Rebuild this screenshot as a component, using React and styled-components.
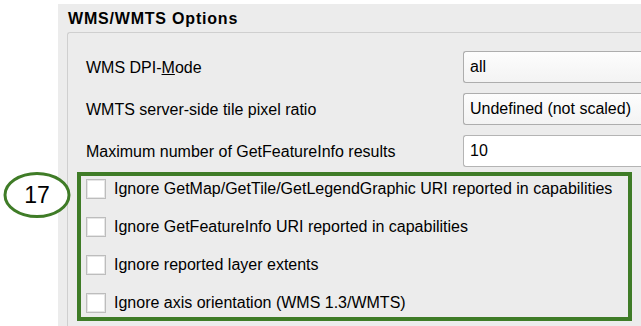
import React from "react";
import styled, { createGlobalStyle } from "styled-components";

const Global = createGlobalStyle`
  html, body { margin: 0; padding: 0; background: #ffffff; overflow: hidden; }
  body { font-family: "Liberation Sans", Arial, sans-serif; }
  #root { width: 641px; height: 326px; overflow: hidden; position: relative; }
`;

const Page = styled.div`
  width: 641px;
  height: 326px;
  padding: 4px 0 0 58px;
  box-sizing: border-box;
  position: relative;
  overflow: hidden;
`;

const Panel = styled.div`
  background: #ececec;
  height: 322px;
  display: flex;
  flex-direction: column;
`;

const Title = styled.div`
  font-weight: bold;
  font-size: 16px;
  line-height: 18px;
  letter-spacing: 0.8px;
  color: #000;
  padding: 6px 0 4px 10px;
  height: 18px;
`;

const GroupBox = styled.div`
  margin-left: 9px;
  border-left: 1px solid #cfcfcf;
  border-top: 1px solid #cfcfcf;
  border-top-left-radius: 3px;
  flex: 1;
  padding-top: 18px;
  display: flex;
  flex-direction: column;
`;

const Form = styled.div`
  display: grid;
  grid-template-columns: 377px 1fr;
  row-gap: 10px;
  padding-left: 18px;
`;

const Label = styled.div`
  font-size: 16px;
  color: #000;
  display: flex;
  align-items: center;
  height: 32px;
  padding-top: 2px;
  box-sizing: border-box;
`;

const Field = styled.div`
  height: 32px;
  box-sizing: border-box;
  border: 1px solid ${(p) => (p.$spin ? "#b4b4b4" : "#adadad")};
  border-right: none;
  border-radius: 3px 0 0 3px;
  background: ${(p) =>
    p.$spin ? "#ffffff" : "linear-gradient(#fdfdfd, #f3f3f3)"};
  font-size: 16px;
  color: #000;
  display: flex;
  align-items: center;
  padding-left: 6px;
  white-space: nowrap;
`;

const Underline = styled.span`
  text-decoration: underline;
`;

const Highlight = styled.div`
  margin: 5px 0 0 9px;
  width: 555px;
  height: 149px;
  box-sizing: border-box;
  border: 4px solid #3f7c27;
  padding-left: 5px;
  display: flex;
  flex-direction: column;
  gap: 12px;
`;

const CheckRow = styled.div`
  height: 26px;
  display: flex;
  align-items: center;
  gap: 8px;
  font-size: 16px;
  color: #000;
  white-space: nowrap;
`;

const Box = styled.span`
  width: 20px;
  height: 20px;
  box-sizing: border-box;
  border: 1px solid #bdbdbd;
  box-shadow: inset 0 0 0 1px #e6e6e6;
  background: #ffffff;
  flex: none;
`;

const Callout = styled.div`
  position: absolute;
  left: 3px;
  top: 172px;
  width: 68px;
  height: 46px;
  display: flex;
  align-items: center;
  justify-content: center;
  font-family: "Liberation Sans", Arial, sans-serif;
  font-size: 23px;
  color: #000;
`;

const Ring = styled.svg`
  position: absolute;
  inset: 0;
`;

const CalloutText = styled.span`
  position: relative;
  margin-top: 1px;
`;

const checks = [
  "Ignore GetMap/GetTile/GetLegendGraphic URI reported in capabilities",
  "Ignore GetFeatureInfo URI reported in capabilities",
  "Ignore reported layer extents",
  "Ignore axis orientation (WMS 1.3/WMTS)",
];

export default function App() {
  return (
    <>
      <Global />
      <Page>
        <Panel>
          <Title>WMS/WMTS Options</Title>
          <GroupBox>
            <Form>
              <Label>
                WMS DPI-<Underline>M</Underline>ode
              </Label>
              <Field>all</Field>
              <Label>WMTS server-side tile pixel ratio</Label>
              <Field>Undefined (not scaled)</Field>
              <Label>Maximum number of GetFeatureInfo results</Label>
              <Field $spin>10</Field>
            </Form>
            <Highlight>
              {checks.map((c) => (
                <CheckRow key={c}>
                  <Box />
                  {c}
                </CheckRow>
              ))}
            </Highlight>
          </GroupBox>
        </Panel>
        <Callout>
          <Ring width="68" height="46" viewBox="0 0 68 46">
            <ellipse cx="34" cy="23" rx="32" ry="21.5" fill="#ffffff" stroke="#3f7c27" strokeWidth="3" />
          </Ring>
          <CalloutText>17</CalloutText>
        </Callout>
      </Page>
    </>
  );
}
